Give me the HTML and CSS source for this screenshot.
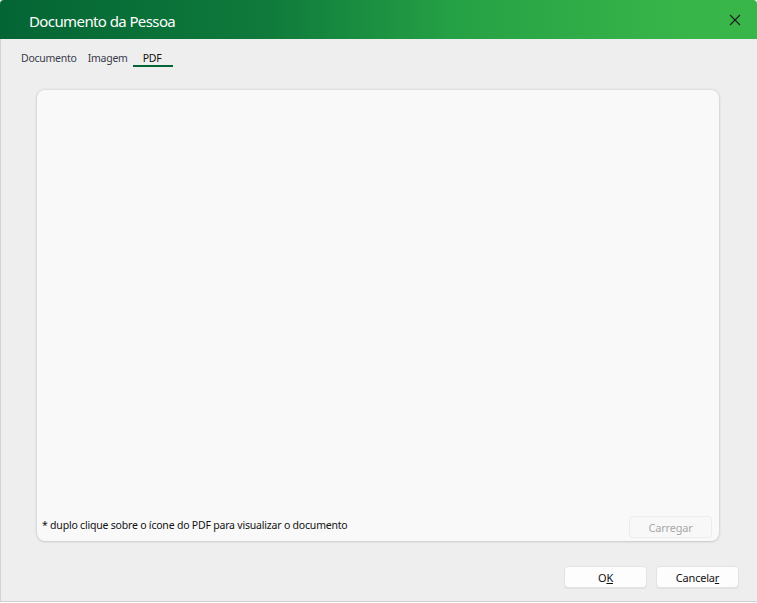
FILE: index.html
```html
<!DOCTYPE html>
<html lang="pt">
<head>
<meta charset="utf-8">
<link rel="stylesheet" href="styles.css">
</head>
<body>
<div class="window">
  <div class="titlebar">
    <span class="title">Documento da Pessoa</span>
    <span class="close"><svg width="12" height="12" viewBox="0 0 12 12"><path d="M1 1 L11 11 M11 1 L1 11" stroke="#1f1f1f" stroke-width="1.2" fill="none"/></svg></span>
  </div>
  <div class="content">
    <div class="tabs">
      <span class="tab">Documento</span>
      <span class="tab">Imagem</span>
      <span class="tab active">PDF</span>
    </div>
    <div class="panel">
      <div class="panel-body"></div>
      <div class="panel-foot">
        <span class="note">* duplo clique sobre o ícone do PDF para visualizar o documento</span>
        <button class="btn disabled">Carregar</button>
      </div>
    </div>
    <div class="actions">
      <button class="btn">O<u>K</u></button>
      <button class="btn">Cancela<u>r</u></button>
    </div>
  </div>
</div>
</body>
</html>
```
FILE: styles.css
```css
html, body { margin: 0; padding: 0; }
body { width: 757px; height: 603px; background: #ffffff; font-family: "Noto Sans", "Open Sans", sans-serif; overflow: hidden; }
.window { width: 757px; height: 602px; background: #eeeeee; border-bottom: 1px solid #cfcfcf; box-sizing: border-box; display: flex; flex-direction: column; border-top-left-radius: 4px; border-top-right-radius: 4px; overflow: hidden; }
.titlebar { height: 39px; flex: none; background: linear-gradient(90deg, #036534 0%, #0f7a3b 35%, #25a145 60%, #38b549 90%, #39b64a 100%); display: flex; align-items: center; justify-content: space-between; padding: 0 16px 0 29px; }
.title { color: #ffffff; font-size: 15px; letter-spacing: -0.6px; position: relative; top: 1px; }
.close { display: flex; align-items: center; width: 12px; height: 12px; }
.content { flex: 1; display: flex; flex-direction: column; border-left: 1px solid #d2d2d2; padding: 0 18px 0 20px; }
.tabs { display: flex; height: 29px; align-items: stretch; }
.tab { font-size: 10.5px; letter-spacing: -0.25px; color: #3a3a4a; display: flex; align-items: flex-start; padding-top: 12px; box-sizing: border-box; margin-right: 11px; }
.tab.active { color: #111; padding-left: 10px; padding-right: 12px; position: relative; margin-left: -6px; }
.tab.active::after { content: ""; position: absolute; left: 0; right: 0; top: 26px; height: 2px; background: #036534; }
.panel { margin: 22px 0 0 16px; width: 682px; height: 451px; background: #f9f9f9; border-radius: 8px; box-shadow: 0 0 3px rgba(0,0,0,0.18), 0 1px 2px rgba(0,0,0,0.08); display: flex; flex-direction: column; box-sizing: border-box; }
.panel-body { flex: 1; }
.panel-foot { display: flex; justify-content: space-between; align-items: flex-start; padding: 0 7px 0 5px; height: 25px; }
.note { font-size: 10.5px; letter-spacing: -0.2px; color: #111; position: relative; top: 2px; }
.btn { font-family: "Noto Sans", "Open Sans", sans-serif; font-size: 11px; letter-spacing: -0.2px; width: 83px; height: 22px; background: #fdfdfd; border: 1px solid #e3e3e3; border-radius: 4px; color: #111; padding: 0; }
.btn.disabled { color: #a8a8a8; background: #f8f8f8; border-color: #ececec; }
.actions { display: flex; justify-content: flex-end; gap: 9px; margin-top: 25px; }
.actions .btn { box-shadow: 0 1px 0 rgba(0,0,0,0.06); }
```
